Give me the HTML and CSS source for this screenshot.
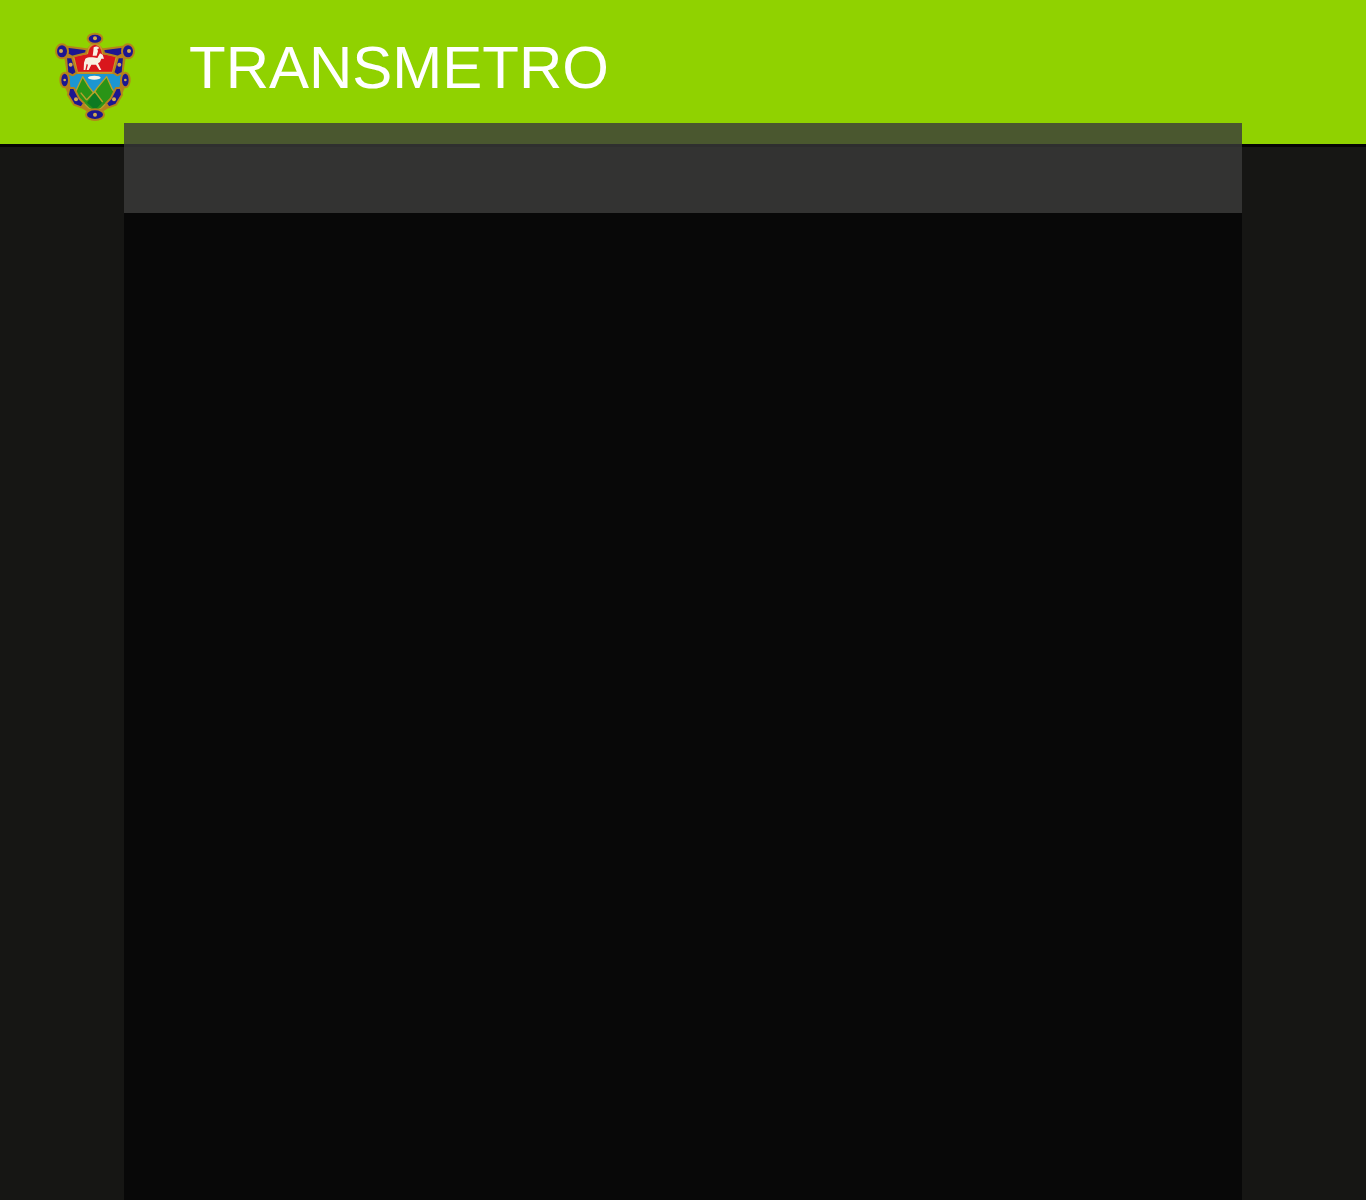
FILE: index.html
```html
<!DOCTYPE html>
<html lang="en">
<head>
    <meta charset="UTF-8">
    <meta name="viewport" content="width=device-width, initial-scale=1.0">
    <title>Transmetro</title>
    <link rel="stylesheet" href="styles.css">
</head>
<body>
    <header class="top-header">
        <svg class="logo" viewBox="0 0 330 312" role="img" aria-label="Escudo">
            <defs>
                <filter id="soft"><feGaussianBlur stdDeviation="1.6"/></filter>
            </defs>
            <g filter="url(#soft)">
                <!-- gold base of the shield -->
                <path fill="#b5821c" d="M70 90l70-14 25-30 25 30 70 14-12 56 16 22-14 34-30 42-38 22-17 10-17-10-38-22-30-42-14-34 16-22z"/>

                <!-- sky and volcanoes -->
                <path fill="#1a96d2" d="M86 150h158l-6 42-36 50h-74l-36-50z"/>
                <ellipse cx="163" cy="161" rx="19" ry="6" fill="#f6f3e6"/>
                <path fill="#2c9418" stroke="#b9a12c" stroke-width="4" stroke-linejoin="round" d="M128 158l18 30 16 20 8-14 30-36 16 36 10 16-42 42-19 10-19-10-42-42 8-18z"/>
                <path fill="#0f7a20" d="M164 206l22 30-21 22-24-22z"/>
                <path fill="none" stroke="#b9a12c" stroke-width="4" d="M140 228l24-26 24 32M122 206l18 22"/>

                <!-- red field -->
                <path fill="#d9141f" stroke="#c89a2a" stroke-width="5" stroke-linejoin="round" d="M100 96l42-8c2-16 11-26 23-28 12 2 21 12 23 28l42 8-12 50H112z"/>
                <g fill="#f8f1e2">
                    <path d="M136 104c8-6 26-4 36-2l8-14 8 4 4 12-8 0-4 10-6 4 10 20h-6l-10-16h-14l-8 16h-6l4-16-4-2-4 18h-5l1-22z"/>
                    <path d="M161 70c7-4 14-2 17 3l-6 2 2 6-4 14h-12l2-14z"/>
                </g>

                <!-- blue border pieces -->
                <g fill="#1c1690" stroke="#b5821c" stroke-width="6" stroke-linejoin="round">
                    <path d="M82 68l58 8-2 12-42 10-14-8z"/>
                    <path d="M248 68l-58 8 2 12 42 10 14-8z"/>
                    <path d="M78 100l18 0 14 46-12 8-16-8z"/>
                    <path d="M252 100l-18 0-14 46 12 8 16-8z"/>
                    <ellipse cx="74" cy="168" rx="13" ry="22"/>
                    <ellipse cx="256" cy="168" rx="13" ry="22"/>
                    <path d="M88 192l14 0 16 32 14 14-8 12-22-8-18-30z"/>
                    <path d="M242 192l-14 0-16 32-14 14 8 12 22-8 18-30z"/>
                    <ellipse cx="165" cy="44" rx="22" ry="15"/>
                    <ellipse cx="66" cy="82" rx="18" ry="21"/>
                    <ellipse cx="264" cy="82" rx="18" ry="21"/>
                    <ellipse cx="165" cy="272" rx="27" ry="16"/>
                </g>

                <!-- gold dots -->
                <g fill="#d2ab52">
                    <circle cx="165" cy="43" r="6"/>
                    <circle cx="63" cy="81" r="6"/>
                    <circle cx="267" cy="81" r="6"/>
                    <circle cx="92" cy="122" r="6"/>
                    <circle cx="238" cy="122" r="6"/>
                    <circle cx="74" cy="168" r="4"/>
                    <circle cx="256" cy="168" r="4"/>
                    <circle cx="108" cy="226" r="6"/>
                    <circle cx="222" cy="226" r="6"/>
                    <circle cx="165" cy="272" r="6"/>
                </g>
            </g>
        </svg>
        <h1 class="site-title">TRANSMETRO</h1>
    </header>

    <main class="page-wrap">
        <div class="nav-bar"></div>
        <div class="page-body"></div>
    </main>
</body>
</html>
```

FILE: styles.css
```css
* {
    margin: 0;
    padding: 0;
    box-sizing: border-box;
}

body {
    background-color: #161614;
    font-family: "Liberation Sans", Arial, sans-serif;
    min-height: 100vh;
}

.top-header {
    display: flex;
    align-items: flex-start;
    height: 147px;
    background: #90d200;
    border-bottom: 3px solid #040404;
    padding: 24px 0 0 40px;
}

.logo {
    width: 110px;
    height: 104px;
    flex-shrink: 0;
}

.site-title {
    margin: 8px 0 0 39px;
    font-size: 60px;
    line-height: 72px;
    font-weight: normal;
    color: #fff;
}

/* main column pulls up over the header */
.page-wrap {
    width: 1118px;
    margin: -24px 0 0 124px;
    position: relative;
}

.nav-bar {
    height: 90px;
    background: rgba(58, 58, 58, 0.81);
}

.page-body {
    height: 987px;
    background: #080808;
}
```
